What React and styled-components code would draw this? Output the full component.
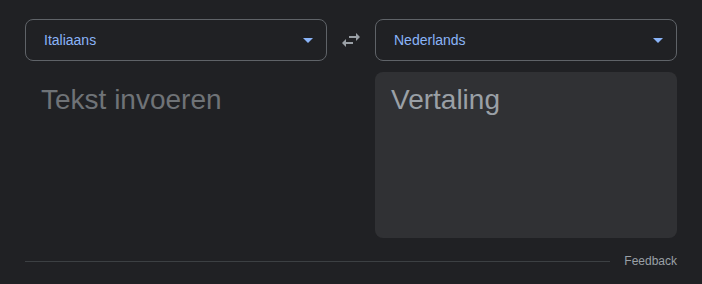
import styled, { createGlobalStyle } from "styled-components";

const GlobalStyle = createGlobalStyle`
  html, body {
    margin: 0;
    padding: 0;
    background: #202124;
  }
  body {
    font-family: Arial, "Liberation Sans", sans-serif;
  }
`;

const Page = styled.div`
  width: 702px;
  height: 284px;
  box-sizing: border-box;
  padding: 19px 25px 0 25px;
  background: #202124;
`;

const Grid = styled.div`
  display: grid;
  grid-template-columns: 302px 48px 302px;
  grid-template-rows: 42px 166px;
  row-gap: 11px;
`;

const Select = styled.div`
  box-sizing: border-box;
  height: 42px;
  border: 1px solid #5f6368;
  border-radius: 8px;
  display: flex;
  align-items: center;
  justify-content: space-between;
  padding: 0 6px 0 18px;
  color: #8ab4f8;
  font-size: 14px;
`;

const SwapButton = styled.div`
  display: flex;
  align-items: center;
  justify-content: center;
  color: #9aa0a6;
`;

const TextPane = styled.div`
  box-sizing: border-box;
  padding: 10px 16px;
  border-radius: 8px;
  background: ${(p) => (p.$output ? "#303134" : "transparent")};
  color: ${(p) => (p.$output ? "#9aa0a6" : "#6f7377")};
  font-size: 28px;
  line-height: 36px;
`;

const Footer = styled.div`
  display: flex;
  align-items: center;
  gap: 14px;
  height: 16px;
  margin-top: 15px;
`;

const Rule = styled.div`
  flex: 1;
  height: 1px;
  background: #3c4043;
`;

const FeedbackLink = styled.span`
  font-size: 12px;
  color: #9aa0a6;
`;

function Caret() {
  return (
    <svg width="24" height="24" viewBox="0 0 24 24" fill="#8ab4f8">
      <path d="M7 10l5 5 5-5z" />
    </svg>
  );
}

function SwapIcon() {
  return (
    <svg width="24" height="24" viewBox="0 0 24 24" fill="currentColor">
      <path d="M6.99 11L3 15l3.99 4v-3H14v-2H6.99v-3zM21 9l-3.99-4v3H10v2h7.01v3L21 9z" />
    </svg>
  );
}

export default function App() {
  return (
    <Page>
      <GlobalStyle />
      <Grid>
        <Select>
          <span>Italiaans</span>
          <Caret />
        </Select>
        <SwapButton>
          <SwapIcon />
        </SwapButton>
        <Select>
          <span>Nederlands</span>
          <Caret />
        </Select>
        <TextPane>Tekst invoeren</TextPane>
        <div />
        <TextPane $output>Vertaling</TextPane>
      </Grid>
      <Footer>
        <Rule />
        <FeedbackLink>Feedback</FeedbackLink>
      </Footer>
    </Page>
  );
}
